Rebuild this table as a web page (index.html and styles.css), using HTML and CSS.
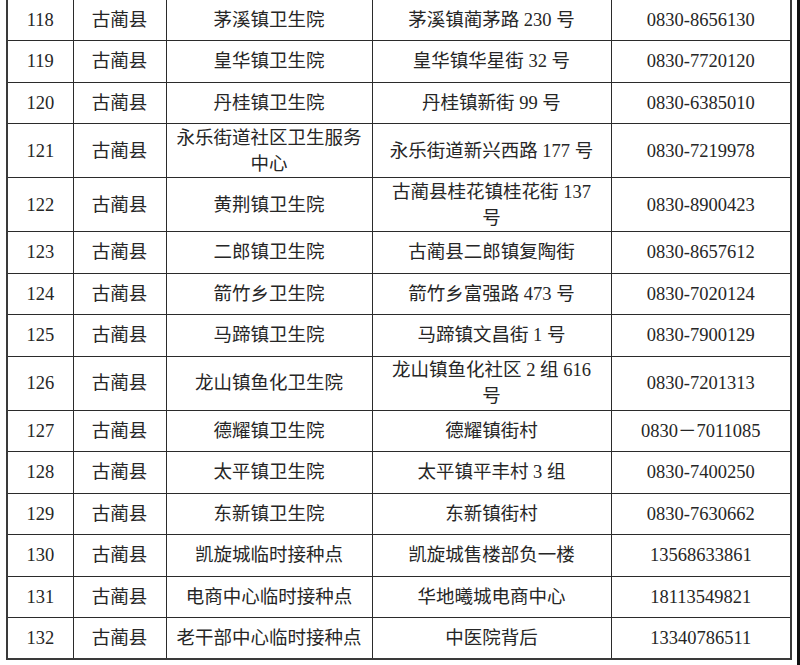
FILE: index.html
```html
<!DOCTYPE html>
<html lang="zh-CN">
<head>
<meta charset="utf-8">
<title>古蔺县接种点</title>
<link rel="stylesheet" href="styles.css">
</head>
<body>
<div class="page">
  <table class="sites">
    <colgroup>
      <col class="c-no"><col class="c-county"><col class="c-name"><col class="c-addr"><col class="c-tel">
    </colgroup>
    <tbody>
      <tr class="r"><td>118</td><td>古蔺县</td><td>茅溪镇卫生院</td><td class="addr">茅溪镇蔺茅路 230 号</td><td>0830-8656130</td></tr>
      <tr class="r"><td>119</td><td>古蔺县</td><td>皇华镇卫生院</td><td class="addr">皇华镇华星街 32 号</td><td>0830-7720120</td></tr>
      <tr class="r"><td>120</td><td>古蔺县</td><td>丹桂镇卫生院</td><td class="addr">丹桂镇新街 99 号</td><td>0830-6385010</td></tr>
      <tr class="t"><td>121</td><td>古蔺县</td><td>永乐街道社区卫生服务中心</td><td class="addr">永乐街道新兴西路 177 号</td><td>0830-7219978</td></tr>
      <tr class="t"><td>122</td><td>古蔺县</td><td>黄荆镇卫生院</td><td class="addr">古蔺县桂花镇桂花街 137 号</td><td>0830-8900423</td></tr>
      <tr class="r"><td>123</td><td>古蔺县</td><td>二郎镇卫生院</td><td class="addr">古蔺县二郎镇复陶街</td><td>0830-8657612</td></tr>
      <tr class="r"><td>124</td><td>古蔺县</td><td>箭竹乡卫生院</td><td class="addr">箭竹乡富强路 473 号</td><td>0830-7020124</td></tr>
      <tr class="r"><td>125</td><td>古蔺县</td><td>马蹄镇卫生院</td><td class="addr">马蹄镇文昌街 1 号</td><td>0830-7900129</td></tr>
      <tr class="t"><td>126</td><td>古蔺县</td><td>龙山镇鱼化卫生院</td><td class="addr">龙山镇鱼化社区 2 组 616 号</td><td>0830-7201313</td></tr>
      <tr class="r"><td>127</td><td>古蔺县</td><td>德耀镇卫生院</td><td class="addr">德耀镇街村</td><td>0830－7011085</td></tr>
      <tr class="r"><td>128</td><td>古蔺县</td><td>太平镇卫生院</td><td class="addr">太平镇平丰村 3 组</td><td>0830-7400250</td></tr>
      <tr class="r"><td>129</td><td>古蔺县</td><td>东新镇卫生院</td><td class="addr">东新镇街村</td><td>0830-7630662</td></tr>
      <tr class="r"><td>130</td><td>古蔺县</td><td>凯旋城临时接种点</td><td class="addr">凯旋城售楼部负一楼</td><td>13568633861</td></tr>
      <tr class="r"><td>131</td><td>古蔺县</td><td>电商中心临时接种点</td><td class="addr">华地曦城电商中心</td><td>18113549821</td></tr>
      <tr class="r"><td>132</td><td>古蔺县</td><td>老干部中心临时接种点</td><td class="addr">中医院背后</td><td>13340786511</td></tr>
    </tbody>
  </table>
  <div class="edge"></div>
</div>
</body>
</html>
```

FILE: styles.css
```css
html, body {
  margin: 0;
  padding: 0;
  background: #ffffff;
}

.page {
  display: flex;
  width: 800px;
  height: 665px;
  overflow: hidden;
  box-sizing: border-box;
  padding-left: 6px;
}

.sites {
  border-collapse: collapse;
  table-layout: fixed;
  width: 786px;
  margin-top: -2px;
  align-self: flex-start;
  border: 2px solid #3a3a3a;
  font-family: "Liberation Serif", "Noto Sans CJK SC", serif;
  font-size: 18.5px;
  color: #262626;
}

.c-no { width: 66px; }
.c-county { width: 93px; }
.c-name { width: 206px; }
.c-addr { width: 239px; }
.c-tel { width: 180px; }

.sites td {
  border: 1px solid #2b2b2b;
  text-align: center;
  vertical-align: middle;
  padding: 0 6px;
  line-height: 26px;
}

.sites td.addr {
  padding: 0 12px;
}

.sites tr.r { height: 41.5px; }
.sites tr.t { height: 54px; }

.edge {
  margin-left: auto;
  width: 3px;
  height: 665px;
  background: #111111;
  flex: none;
}
```
